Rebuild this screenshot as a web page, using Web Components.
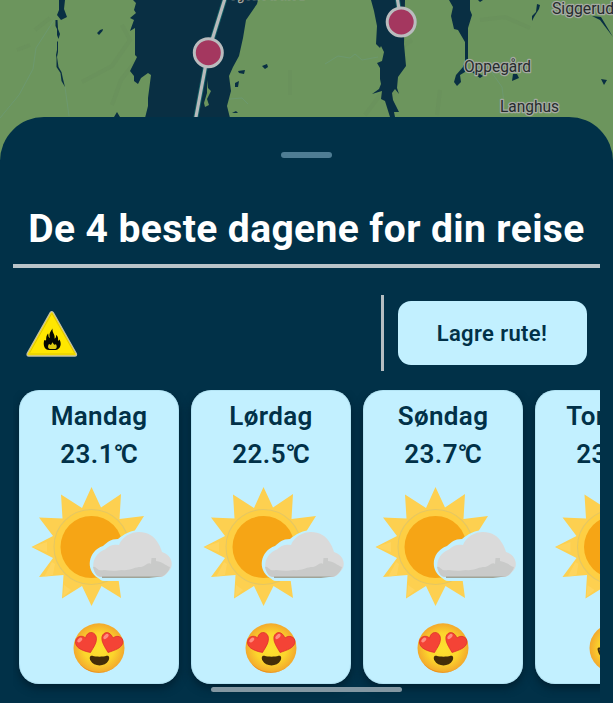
<!DOCTYPE html>
<html lang="no">
<head>
<meta charset="utf-8">
<title>De 4 beste dagene</title>
<style>
html,body{margin:0;height:703px;overflow:hidden;background:#013148}
body{font-family:Roboto,"Noto Sans",sans-serif}
</style>
</head>
<body>
<travel-app></travel-app>
<script>
const define = (name, html) => {
  const t = document.createElement('template');
  t.innerHTML = html;
  customElements.define(name, class extends HTMLElement {
    connectedCallback() {
      if (this.shadowRoot) return;
      this.attachShadow({mode: 'open'}).append(t.content.cloneNode(true));
    }
  });
};

define('route-map', `
<style>:host{display:block;height:160px;background:#6c955d}svg{display:block}
text{font-family:Roboto,"Noto Sans",sans-serif;font-size:16px;fill:#272c2d;stroke:#a5aaa3;stroke-width:2.6px;paint-order:stroke;stroke-linejoin:round}</style>
<svg width="613" height="160" viewBox="0 0 613 160">
  <g fill="none" stroke="#668a5b" stroke-width="4" opacity=".3">
    <path d="M122 25L130 40L112 66L82 82M135 62L121 80L112 105M35 30L50 18M17 50L30 45M440 90L437 115M365 115L380 95L396 92M480 20L505 17L530 28M290 70V95M400 48L412 40"/>
  </g>
  <g fill="none" stroke="#6c9a76" stroke-width="1" opacity=".7">
    <path d="M54 20L36 48L33 69L19 95L0 118M65 87L69 116M325 64L338 56L350 58L355 54L362 60L378 57M490 70L502 87L504 103M230 99L242 98L248 104"/>
  </g>
  <g fill="#092f43">
    <path d="M59 0H65L64 9L67 17L61 20L57 15L59 10Z"/>
    <path d="M55.500 20L57.500 20L58 29L60 34L58.500 39L57 35L57 29L55.500 26ZM57 41L58 42V52L57 57L58.500 67L61.500 72L63 79L65 87L61.500 81L60.500 73L56.500 67V58L56 55L57 50Z"/>
    <path d="M97 33L100 30L103 29L102.500 31L99 35ZM114 117L117 112L120 117Z"/>
    <path d="M133 0L136 3L134 10L136 13L130 18L134 20L130 31L135 28L135 55L137 57L130 71L134 76V81L138 84L141 78L148 73L151 75L148 98V106L145 118H230L227 106L231 91L229 76L233 67L239 56L243 38L246 20L257 4L258 0Z"/>
    <path d="M238 71L245 70L244 74L239 73ZM262 66L267 64L268 67L265 69ZM235 83L239 81L238 87H235ZM232 113L236 111L238 113ZM138 32H140V33H138Z"/>
    <path d="M371 0L374 11L377 26L376 44L380 48L381 46L384 52L382 61L377 63L380 68V79L381 84L379 89L372 94L382 91L381 99L385 101L390 117H395L394 112H399L396 106L393 100L392 93L395 89L399 94L397 88L398 77L406 66L404 44L405 0Z"/>
    <path d="M449 0H470V10L472 15L468 28L468 63L465 72L460 75L461 82L457 86L454 82L456 75L463 67L465 62V42L458 30L454 29L451 16L453 7ZM478 0H483L480 2ZM537 4L540 5L539 9L534 17L532 21L532 16L536 12ZM513 74H517L519 78L512 81ZM601 79L607 80L604 85ZM592 16L601 17L613 37L600 20ZM468 69L477 72L483 76L480 78Z"/>
  </g>
  <path d="M207 80L208 88L211 91L207 99L209 105L205 107L204 103L207 93Z" fill="#6c955d"/>
  <path d="M227-8L208 53L195 122M396-10L401 22" fill="none" stroke="#126065" stroke-width="5"/>
  <path d="M227-8L208 53L195 122M396-10L401 22" fill="none" stroke="#b7babb" stroke-width="3.2"/>
  <g fill="#a4375f" stroke="#babcbe" stroke-width="3"><circle cx="208.3" cy="52.7" r="14"/><circle cx="401.2" cy="22" r="14"/></g>
  <text x="231" y="-.7" textLength="74" lengthAdjust="spacingAndGlyphs">Fjellstrand</text>
  <text x="552" y="14" textLength="62" lengthAdjust="spacingAndGlyphs">Siggerud</text>
  <text x="464" y="71.500" textLength="67" lengthAdjust="spacingAndGlyphs">Oppegård</text>
  <text x="500" y="112" textLength="59" lengthAdjust="spacingAndGlyphs">Langhus</text>
</svg>`);

define('fire-warning', `
<style>:host{display:block;width:52px;height:48px}svg{display:block}</style>
<svg width="52" height="48" viewBox="0 0 52 48">
<path d="M24.2 2.6Q25.7.7 27.3 2.6L50.3 43.4Q51.2 46 48.8 46H2.8Q.5 46 1.2 43.4Z" fill="#ffe600" stroke="#c3c0a0" stroke-width="1.3"/>
<path d="M2.5 44H49M25.7 3.5L3.5 43M26 3.5L48.5 43" fill="none" stroke="#cfb800" stroke-width=".7"/>
<path d="M26.5 18.5C24.2 22 22.6 24 24 28C21.8 27 22.8 24.5 22 23.5C19.5 27 20.5 29 20 30.5L18.4 30C16.5 35 18.8 40 23 40H30C34.5 39 36 34 33.5 29.5L32 31C32.5 28 31.5 25.5 30 25C30.4 27 29.5 28.5 28.5 28.5C29.5 24.5 26 23 26.5 18.5Z" fill="#050700"/>
<path d="M26.4 32.2L28.2 34.8L30 34.2C31.5 37 30.5 38.8 29 39H24C21.5 38.3 21.7 36 23 34L25 35Z" fill="#dfcb12"/>
</svg>`);

const sun = `<path d="M72.5 7L82 27.5L102 14L100.5 39L125 36L113 55L133 67L113 78L125 97L99 95.5L102 118L82.5 106L72.5 126L63 106L43 118.500L44.500 95L20 97L34 78L12.500 67L34 56L20 37.500L43.500 38.500L42 14.500L63 28Z" fill="#fdd050"/>
<circle cx="72.5" cy="67" r="37.5" fill="#fecf43" stroke="#e5c763" stroke-width="1.1"/>
<circle cx="72.5" cy="67" r="31" fill="#f6a515"/>
<path d="M28 62L13 67L28 72ZM36 84L34 95L25 97L33 82ZM45 105L52 110L44 117Z" fill="#ffdc70" opacity=".45"/>`;

define('clear-sky', `
<style>:host{display:block;width:160px;height:130px}svg{display:block}</style>
<svg width="160" height="130" viewBox="-7.500 0 160 130">${sun}</svg>`);

define('partly-sunny', `
<style>:host{display:block;width:160px;height:130px}svg{display:block}</style>
<svg width="160" height="130" viewBox="0 0 160 130">${sun}
<path d="M79 98C66 90 69 71 84 66C89 62 91 59 99 59C108 51 126 44 139 58C144 64 145 69 147 72C156 76 159 85 152 93L146 99L104 101H85C82 101 81 99 79 98Z" fill="#c2f0ff"/>
<path d="M110 53L133 45V100H110Z" fill="#c2f0ff"/>
<path d="M81 97C70 91 73 74 86 69.500C90 65.500 94 64 100 65C106 49 131 47 139 63C141 66 142 69 143 72C153 75 156 86 149 92C146 96 144 97 140 97Z" fill="#dadada"/>
<path d="M74 87C77 85 78 92 85 90C91 91 98 91 103 90C110 91 113 88 120 87C125 88 129 81 132 84L132.500 78H137V81C144 82 149 87 151 87C150 92 145 96 142 97H82C77 97 75 91 74 87Z" fill="#c9cac9"/>
<path d="M83 96.500H142L130 97.900H83Z" fill="#a0a397"/>
</svg>`);

const face = `<defs><radialGradient id="f"><stop stop-color="#fde12f"/><stop offset=".6" stop-color="#fcd52c"/><stop offset="1" stop-color="#f3a92d"/></radialGradient></defs>
<ellipse cx="27" cy="26" rx="25.500" ry="24.700" fill="url(#f)"/>`;

define('love-face', `
<style>:host{display:block;width:54px;height:52px}svg{display:block}</style>
<svg width="54" height="52" viewBox="0 0 54 52">${face}
<path d="M7 41C18 53 38 53 47 41C37 54 16 54 7 41Z" fill="#ed9018"/>
<g fill="#f44336" stroke="#d9282c" stroke-width=".7"><path d="M18.500 30.500C8 28.500 3 24.500 3.500 19.500C4 14.500 10 12.500 13.500 16C15 9 22 9 24 14C26 20 21 26 18.500 30.500Z"/><path d="M36 30.500C33 25 29 20 30 14.500C32 9 38 9 41 16C45 12.500 51 15 51 19.500C51 26 42 28.500 36 30.500Z"/></g>
<ellipse cx="7.800" cy="18" rx="1.700" ry="3" fill="#ff8c80" transform="rotate(45 7.800 18)"/><ellipse cx="34" cy="14.500" rx="1.700" ry="3.200" fill="#ff8c80" transform="rotate(45 34 14.500)"/>
<path d="M20.500 33.800C24 35 31 35 34.500 33.800C37 33 38 35.500 36.500 38.500C33 45 22 45 18.500 38.500C17 35.500 18 33 20.500 33.800Z" fill="#442d08"/>
</svg>`);

define('joy-face', `
<style>:host{display:block;width:54px;height:52px}svg{display:block}</style>
<svg width="54" height="52" viewBox="0 0 54 52">${face}
<path d="M9.500 27C10 24 14 26 18 27H36C40 26 44 24 44.500 27C43 45 12 45 9.500 27Z" fill="#442d08"/><path d="M11.500 27.500C20 30 34 30 42.500 27.500L41 31H13Z" fill="#fff"/></svg>`);

define('day-card', `
<style>:host{flex:0 0 160px;height:294px;border-radius:20px;background:#c2f0ff;color:#013148;box-shadow:0 4px 8px #001c2acc,inset 0 0 0 1px #9ed1e366;display:flex;flex-direction:column;align-items:center;text-align:center;overflow:hidden}
.day,.temp{font-size:26px;line-height:38px;font-weight:600;letter-spacing:.35px;white-space:nowrap}
.day{padding-top:7px}.temp{letter-spacing:.5px}
.weather{margin-top:7px}.face{margin-top:12px}</style>
<div class="day"><slot name="day"></slot></div><div class="temp"><slot name="temp"></slot></div>
<div class="weather"><slot name="sky"><partly-sunny></partly-sunny></slot></div><div class="face"><slot name="face"></slot></div>`);

define('temp-value', `<style>:host{display:inline}.deg{letter-spacing:-2.800px;margin-left:-.5px}.c{letter-spacing:0}</style><slot></slot><span class="deg">°</span><span class="c">C</span>`);

define('save-button', `
<style>:host{display:block;width:189px;height:64px}button{width:100%;height:100%;border:0;padding:0 1px 0 0;border-radius:13px;background:#c2f0ff;color:#013148;font:600 22px Roboto,sans-serif;letter-spacing:.38px}</style>
<button><slot></slot></button>`);

define('travel-sheet', `
<style>:host{display:flex;flex-direction:column;height:586px;margin-top:-43px;position:relative;background:#013148;border-radius:44px 44px 0 0;box-sizing:border-box;padding:35px 13px 0;overflow:hidden}
.handle{width:51px;height:6px;border-radius:3px;background:#4f7d94;align-self:center;flex:none}
h1{margin:40px 0 0;height:62px;line-height:62px;font-size:39px;font-weight:700;color:#fff;white-space:nowrap;text-align:center;letter-spacing:.4px}
.rule{height:4px;background:#bac4c9;margin-top:4px;flex:none}
.actions{display:flex;height:76px;margin-top:27px;align-items:center;flex:none}
.divider{width:3px;height:76px;background:#b5bdc1;margin-left:auto;margin-right:14px}
save-button{margin-right:13px}fire-warning{margin-left:13px;margin-top:2px}
.days{display:flex;gap:12px;margin-top:19px;height:313px;padding-left:6px;overflow:hidden;flex:none}
.bar{position:absolute;left:211px;bottom:11px;width:191px;height:5px;border-radius:3px;background:#8397a2}</style>
<div class="handle"></div><h1>De 4 beste dagene for din reise</h1><div class="rule"></div>
<div class="actions"><fire-warning></fire-warning><div class="divider"></div><save-button>Lagre rute!</save-button></div>
<div class="days">
<day-card><span slot="day">Mandag</span><temp-value slot="temp">23.1</temp-value><love-face slot="face"></love-face></day-card>
<day-card><span slot="day">Lørdag</span><temp-value slot="temp">22.5</temp-value><love-face slot="face"></love-face></day-card>
<day-card><span slot="day">Søndag</span><temp-value slot="temp">23.7</temp-value><love-face slot="face"></love-face></day-card>
<day-card><span slot="day">Torsdag</span><temp-value slot="temp">23.0</temp-value><clear-sky slot="sky"></clear-sky><joy-face slot="face"></joy-face></day-card>
</div><div class="bar"></div>`);

define('travel-app', `<style>:host{display:block;width:613px;height:703px;overflow:hidden}</style><route-map></route-map><travel-sheet></travel-sheet>`);
</script>
</body>
</html>
